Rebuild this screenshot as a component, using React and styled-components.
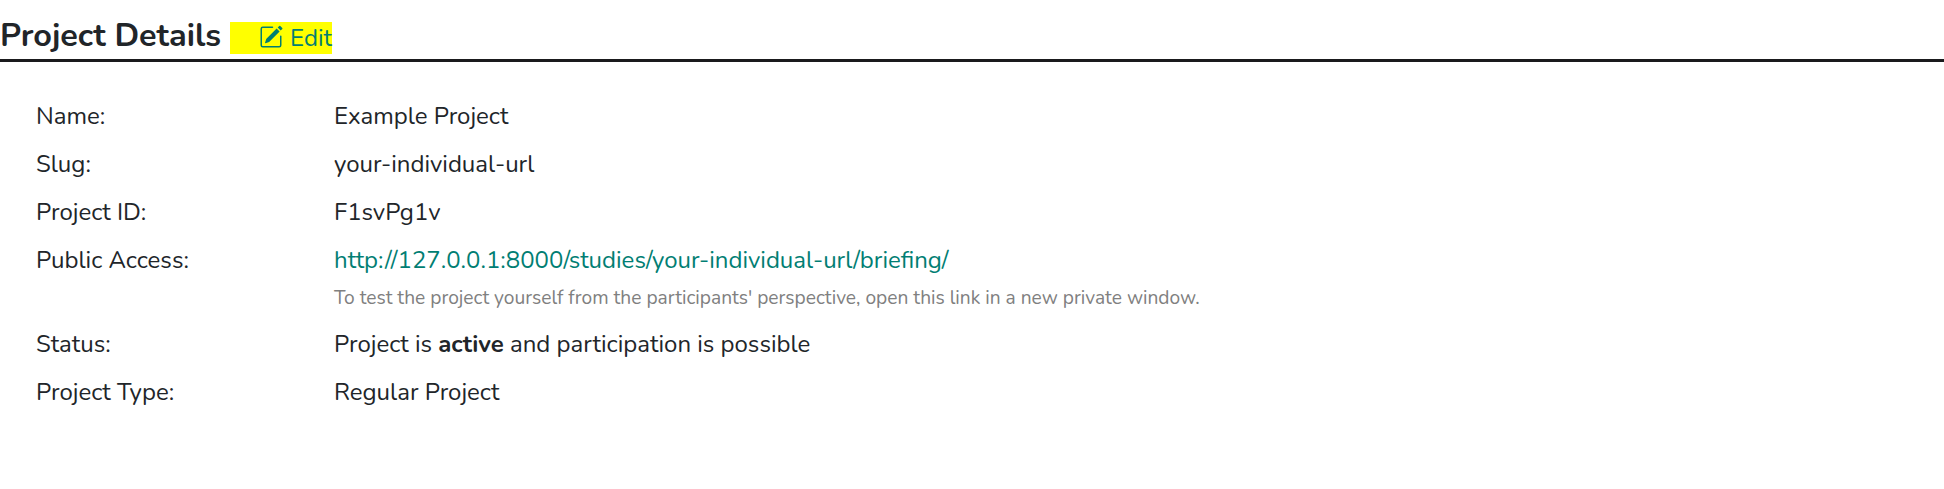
import React from 'react';
import styled, { createGlobalStyle } from 'styled-components';
import { BsPencilSquare } from 'react-icons/bs';

const GlobalStyle = createGlobalStyle`
  *, *::before, *::after { box-sizing: border-box; }
  body {
    margin: 0;
    background: #fff;
    color: #212529;
    font-family: Nunito, Lato, "Open Sans", sans-serif;
    font-size: 24px;
    line-height: 36px;
  }
`;

const Header = styled.header`
  display: flex;
  align-items: flex-start;
  height: 62px;
  padding-top: 14px;
  border-bottom: 3px solid #1a1a1d;
`;

const Title = styled.h1`
  width: 230px;
  margin: 0;
  font-size: 32.4px;
  font-weight: 700;
  line-height: 42px;
  white-space: nowrap;
`;

const EditLink = styled.a`
  display: flex;
  width: 102px;
  height: 32px;
  margin-top: 8px;
  padding-left: 29px;
  background: #ffff00;
  color: #017e73;
  line-height: 33px;
  text-decoration: none;

  svg {
    flex: none;
    margin: 3px 7px 0 0;
  }
`;

const Details = styled.dl`
  margin: 0;
  padding: 30px 36px 0;
`;

const Row = styled.div`
  display: grid;
  grid-template-columns: 298px 1fr;
  padding: 6px 0;
`;

const Label = styled.dt`
  white-space: nowrap;
`;

const Value = styled.dd`
  margin: 0;
  white-space: nowrap;
`;

const Strong = styled.strong`
  font-weight: 700;
`;

const PublicLink = styled.a`
  color: #017e73;
  text-decoration: none;
`;

const Hint = styled.p`
  height: 36px;
  margin: 0;
  color: #808080;
  font-size: 19.2px;
  line-height: 40px;
`;

export default function App() {
  return (
    <>
      <GlobalStyle />
      <Header>
        <Title>Project Details</Title>
        <EditLink>
          <BsPencilSquare size={24} />
          Edit
        </EditLink>
      </Header>
      <Details>
        <Row>
          <Label>Name:</Label>
          <Value>Example Project</Value>
        </Row>
        <Row>
          <Label>Slug:</Label>
          <Value>your-individual-url</Value>
        </Row>
        <Row>
          <Label>Project ID:</Label>
          <Value>F1svPg1v</Value>
        </Row>
        <Row>
          <Label>Public Access:</Label>
          <Value>
            <PublicLink>http://127.0.0.1:8000/studies/your-individual-url/briefing/</PublicLink>
            <Hint>
              To test the project yourself from the participants' perspective, open this link in a new private window.
            </Hint>
          </Value>
        </Row>
        <Row>
          <Label>Status:</Label>
          <Value>
            Project is <Strong>active</Strong> and participation is possible
          </Value>
        </Row>
        <Row>
          <Label>Project Type:</Label>
          <Value>Regular Project</Value>
        </Row>
      </Details>
    </>
  );
}
